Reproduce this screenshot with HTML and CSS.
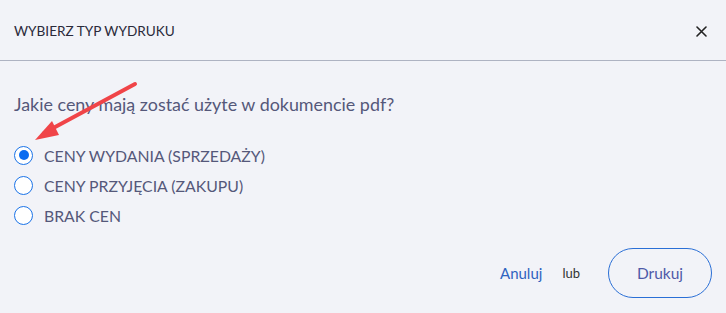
FILE: index.html
```html
<!DOCTYPE html>
<html lang="pl">
<head>
<meta charset="utf-8">
<link rel="stylesheet" href="styles.css">
</head>
<body>
<div class="dialog">
  <div class="header">
    <span class="title">WYBIERZ TYP WYDRUKU</span>
    <svg class="close" width="11" height="11" viewBox="0 0 11 11"><path d="M1 1L10 10M10 1L1 10" stroke="#222" stroke-width="1.6" stroke-linecap="round"/></svg>
  </div>
  <div class="body">
    <p class="question">Jakie ceny mają zostać użyte w dokumencie pdf?</p>
    <div class="options">
      <label class="option"><span class="radio checked"></span><span>CENY WYDANIA (SPRZEDAŻY)</span></label>
      <label class="option"><span class="radio"></span><span>CENY PRZYJĘCIA (ZAKUPU)</span></label>
      <label class="option"><span class="radio"></span><span>BRAK CEN</span></label>
    </div>
    <svg class="arrow" width="120" height="70" viewBox="0 0 120 70">
      <line x1="113" y1="7" x2="22" y2="56" stroke="#f04448" stroke-width="4" stroke-linecap="round"/>
      <polygon points="13,63 30,44 37,58" fill="#f04448"/>
    </svg>
  </div>
  <div class="footer">
    <a class="cancel">Anuluj</a>
    <span class="or">lub</span>
    <button class="print">Drukuj</button>
  </div>
</div>
</body>
</html>
```
FILE: styles.css
```css
html, body {
  margin: 0;
  padding: 0;
  background: #f2f3f8;
}
body {
  font-family: Lato, "Noto Sans", sans-serif;
  width: 726px;
  height: 313px;
  overflow: hidden;
}
.dialog {
  display: flex;
  flex-direction: column;
}
.header {
  height: 60px;
  border-bottom: 1px solid #aeb3c2;
  display: flex;
  align-items: center;
  justify-content: space-between;
  padding: 0 19px 0 14px;
}
.title {
  font-size: 13.6px;
  color: #2a2a3a;
  padding-top: 2px;
}
.close {
  margin-top: 2px;
}
.body {
  position: relative;
  padding: 31px 14px 0 14px;
}
.question {
  margin: 0;
  font-size: 17.9px;
  color: #55587a;
  line-height: 24px;
}
.options {
  margin-top: 24px;
  display: flex;
  flex-direction: column;
}
.option {
  display: flex;
  align-items: center;
  height: 30px;
  font-size: 15.8px;
  color: #55587a;
  gap: 11px;
}
.radio {
  width: 17px;
  height: 17px;
  border: 1.5px solid #1a73e8;
  border-radius: 50%;
  background: #fff;
  display: flex;
  align-items: center;
  justify-content: center;
  flex: none;
}
.radio.checked::after {
  content: "";
  width: 10px;
  height: 10px;
  border-radius: 50%;
  background: #0b6cf0;
}
.arrow {
  position: absolute;
  left: 22px;
  top: 16px;
}
.footer {
  display: flex;
  align-items: center;
  justify-content: flex-end;
  padding: 18px 14px 0 0;
}
.cancel {
  font-size: 15px;
  color: #2f63c0;
}
.or {
  font-size: 13px;
  color: #333;
  margin-left: 20px;
  margin-right: 28px;
}
.print {
  width: 104px;
  height: 50px;
  border: 1.5px solid #2a6fd6;
  border-radius: 25px;
  background: transparent;
  font-family: inherit;
  font-size: 15.5px;
  color: #4f5aa8;
}
```
